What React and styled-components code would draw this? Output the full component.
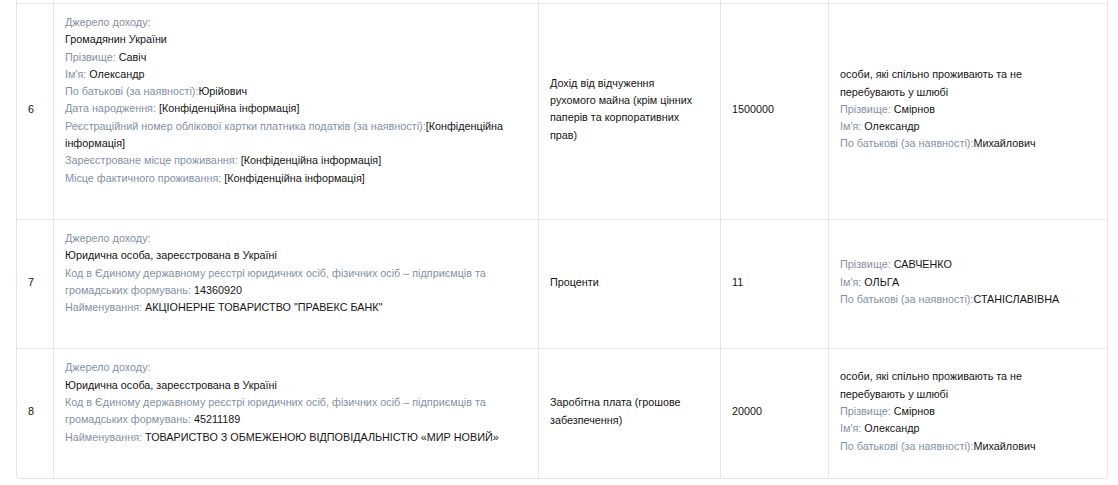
import React from 'react'
import styled, { createGlobalStyle } from 'styled-components'

const GlobalStyle = createGlobalStyle`
  body {
    margin: 0;
    background: #fff;
    font-family: "Liberation Sans", Arial, sans-serif;
  }
`

const Wrapper = styled.div`
  margin-left: 16px;
  width: 1092px;
  box-sizing: border-box;
  border: 1px solid #e3e6ea;
  border-top: none;
  border-radius: 0 0 4px 4px;
  overflow: hidden;
`

const Table = styled.table`
  width: 100%;
  border-collapse: separate;
  border-spacing: 0;
  table-layout: fixed;
  font-size: 10.8px;
  line-height: 17.3px;
  color: #151515;
`

const Cell = styled.td`
  box-sizing: border-box;
  border-top: 1px solid #e3e6ea;
  padding: 10px 22px 14px 11px;
  vertical-align: middle;
  text-align: left;
  & + & {
    border-left: 1px solid #e3e6ea;
  }
`

const SourceCell = styled(Cell)`
  vertical-align: top;
  padding-bottom: 32px;
`

const StubCell = styled.td`
  height: 3px;
  padding: 0;
  & + & {
    border-left: 1px solid #e3e6ea;
  }
`

const Line = styled.div`
  white-space: normal;
`

const Label = styled.span`
  color: #8591a5;
`

const Field = ({ label, value }) => (
  <Line>
    <Label>{label}</Label>
    {value}
  </Line>
)

const Person = ({ relation, last, first, middle }) => (
  <>
    {relation && <Line>{relation}</Line>}
    <Field label="Прізвище: " value={last} />
    <Field label="Ім'я: " value={first} />
    <Field label="По батькові (за наявності):" value={middle} />
  </>
)

const SECRET = '[Конфіденційна інформація]'
const CODE_LABEL = 'Код в Єдиному державному реєстрі юридичних осіб, фізичних осіб – підприємців та громадських формувань: '
const PARTNER = {
  relation: 'особи, які спільно проживають та не перебувають у шлюбі',
  last: 'Смірнов',
  first: 'Олександр',
  middle: 'Михайлович',
}

const rows = [
  {
    n: 6,
    source: (
      <>
        <Field label="Джерело доходу:" />
        <Line>Громадянин України</Line>
        <Field label="Прізвище: " value="Савіч" />
        <Field label="Ім'я: " value="Олександр" />
        <Field label="По батькові (за наявності):" value="Юрійович" />
        <Field label="Дата народження: " value={SECRET} />
        <Field label="Реєстраційний номер облікової картки платника податків (за наявності):" value={SECRET} />
        <Field label="Зареєстроване місце проживання: " value={SECRET} />
        <Field label="Місце фактичного проживання: " value={SECRET} />
      </>
    ),
    type: 'Дохід від відчуження рухомого майна (крім цінних паперів та корпоративних прав)',
    amount: '1500000',
    member: PARTNER,
  },
  {
    n: 7,
    source: (
      <>
        <Field label="Джерело доходу:" />
        <Line>Юридична особа, зареєстрована в Україні</Line>
        <Field label={CODE_LABEL} value="14360920" />
        <Field label="Найменування: " value={'АКЦІОНЕРНЕ ТОВАРИСТВО "ПРАВЕКС БАНК"'} />
      </>
    ),
    type: 'Проценти',
    amount: '11',
    member: { last: 'САВЧЕНКО', first: 'ОЛЬГА', middle: 'СТАНІСЛАВІВНА' },
  },
  {
    n: 8,
    source: (
      <>
        <Field label="Джерело доходу:" />
        <Line>Юридична особа, зареєстрована в Україні</Line>
        <Field label={CODE_LABEL} value="45211189" />
        <Field label="Найменування: " value="ТОВАРИСТВО З ОБМЕЖЕНОЮ ВІДПОВІДАЛЬНІСТЮ «МИР НОВИЙ»" />
      </>
    ),
    type: 'Заробітна плата (грошове забезпечення)',
    amount: '20000',
    member: PARTNER,
  },
]

export default function App() {
  return (
    <>
      <GlobalStyle />
      <Wrapper>
        <Table>
          <colgroup>
            <col style={{ width: 36 }} />
            <col style={{ width: 485 }} />
            <col style={{ width: 182 }} />
            <col style={{ width: 108 }} />
            <col style={{ width: 279 }} />
          </colgroup>
          <tbody>
            <tr>
              <StubCell />
              <StubCell />
              <StubCell />
              <StubCell />
              <StubCell />
            </tr>
            {rows.map(row => (
              <tr key={row.n}>
                <Cell>{row.n}</Cell>
                <SourceCell>{row.source}</SourceCell>
                <Cell>{row.type}</Cell>
                <Cell>{row.amount}</Cell>
                <Cell>
                  <Person {...row.member} />
                </Cell>
              </tr>
            ))}
          </tbody>
        </Table>
      </Wrapper>
    </>
  )
}
